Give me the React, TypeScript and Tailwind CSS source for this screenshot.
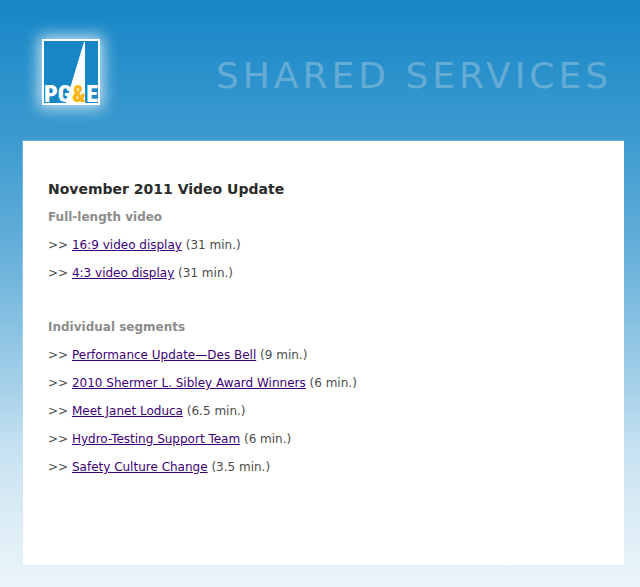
type Video = { title: string; length: string };

const fullLength: Video[] = [
  { title: "16:9 video display", length: "31 min." },
  { title: "4:3 video display", length: "31 min." },
];

const segments: Video[] = [
  { title: "Performance Update—Des Bell", length: "9 min." },
  { title: "2010 Shermer L. Sibley Award Winners", length: "6 min." },
  { title: "Meet Janet Loduca", length: "6.5 min." },
  { title: "Hydro-Testing Support Team", length: "6 min." },
  { title: "Safety Culture Change", length: "3.5 min." },
];

function Logo() {
  return (
    <svg
      width="58"
      height="66"
      viewBox="0 0 58 66"
      role="img"
      aria-label="PG&E"
      className="shrink-0 shadow-[0_0_14px_3px_rgba(255,255,255,0.75)]"
    >
      <rect width="58" height="66" fill="#fff" />
      <rect x="2" y="2" width="54" height="62" fill="#1686c6" />
      <path d="M42 3 L29 46 L24 64 H43 V3 Z" fill="#fff" />
      <text
        x="2"
        y="63"
        fontFamily="'Roboto Condensed', Roboto, sans-serif"
        fontWeight="900"
        fontSize="24"
        fill="#fff"
      >
        PG<tspan fill="#fdb515">&amp;</tspan>E
      </text>
    </svg>
  );
}

function VideoSection({ heading, videos }: { heading: string; videos: Video[] }) {
  return (
    <section>
      <h3 className="font-bold text-[#8c8c8a]">{heading}</h3>
      <ul>
        {videos.map((video) => (
          <li key={video.title}>
            &gt;&gt;{" "}
            <a href="#" className="text-[#3d0079] underline">
              {video.title}
            </a>{" "}
            ({video.length})
          </li>
        ))}
      </ul>
    </section>
  );
}

export default function App() {
  return (
    <div className="flex min-h-screen flex-col bg-linear-[180deg,#1686c6_0%,#3d9bd0_24%,#64aed9_42%,#9acbe6_62%,#c8e2f1_77%,#deeef6_90%,#ebf5fb_100%] px-4 pb-[22px] pl-[22px] font-[Verdana,'DejaVu_Sans',sans-serif]">
      <header className="flex h-[140px] items-center justify-between pt-1 pr-3 pl-5">
        <Logo />
        <h1 className="pt-2 text-4xl tracking-[4px] text-[#64abd5]">SHARED SERVICES</h1>
      </header>
      <div className="flex flex-1 bg-linear-to-b from-[#5fb0dc] to-[#e6f2f9] pt-px pl-px">
        <main className="flex-1 bg-white px-[25px] pt-[34px] text-xs leading-7 text-[#4c4c4a]">
          <h2 className="text-sm leading-7 font-bold text-[#2b2b29]">November 2011 Video Update</h2>
          <div className="flex flex-col gap-[26px]">
            <VideoSection heading="Full-length video" videos={fullLength} />
            <VideoSection heading="Individual segments" videos={segments} />
          </div>
        </main>
      </div>
    </div>
  );
}
